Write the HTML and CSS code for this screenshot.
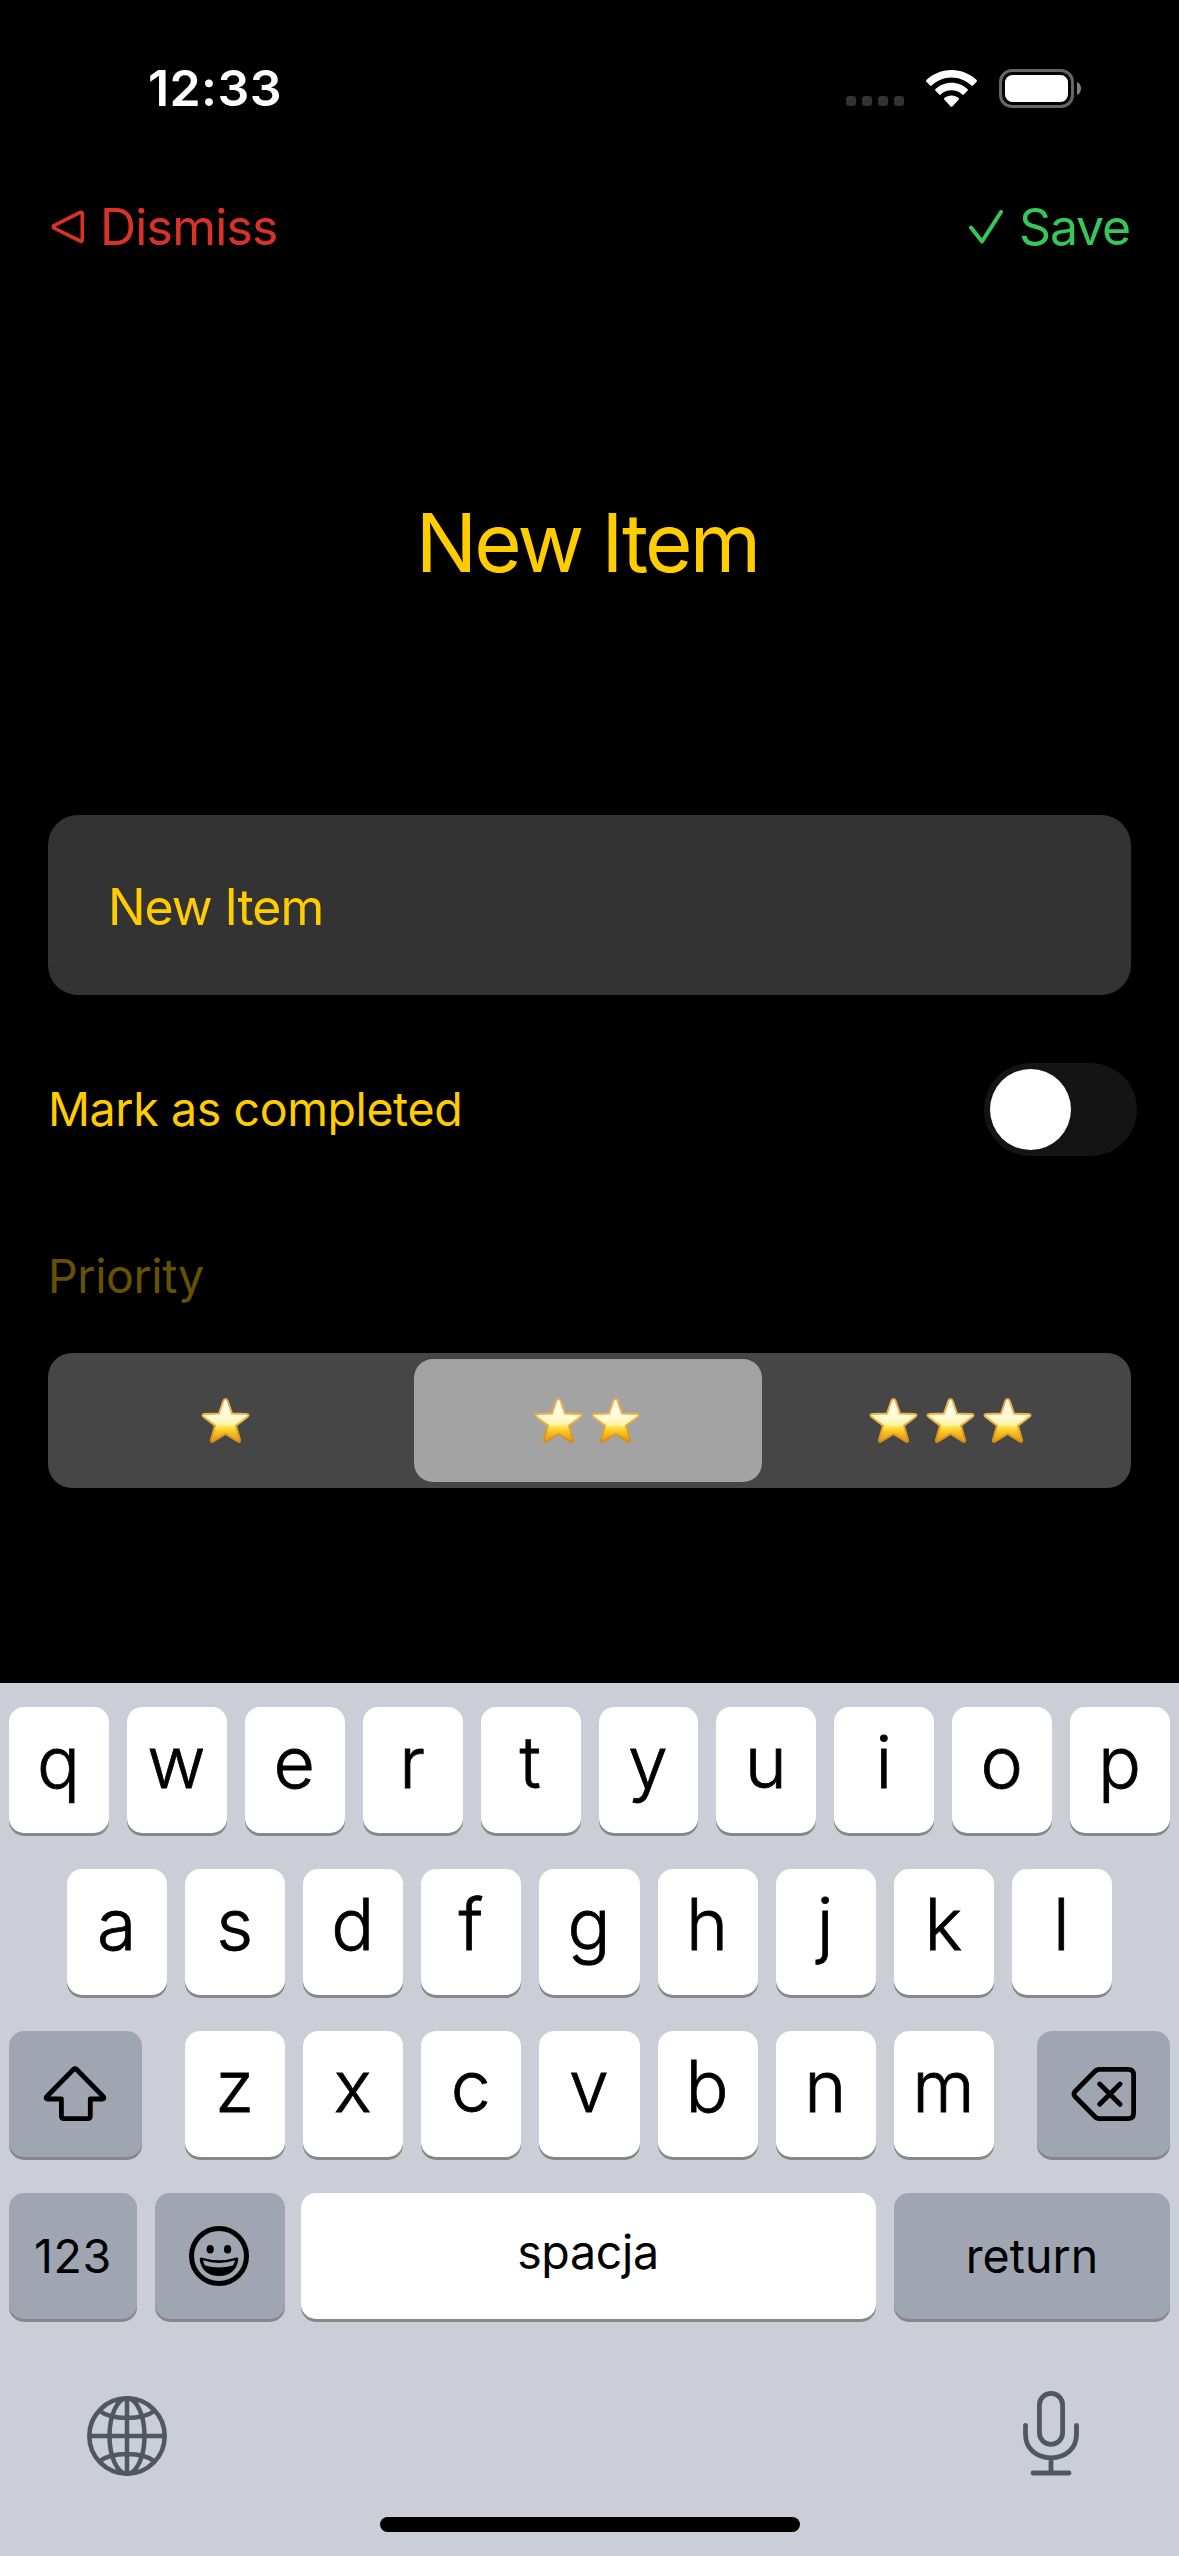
FILE: index.html
```html
<!DOCTYPE html>
<html lang="pl">
<head>
<meta charset="utf-8">
<title>New Item</title>
<link rel="stylesheet" href="styles.css">
</head>
<body>
<svg class="defs" width="0" height="0" aria-hidden="true">
  <defs>
    <linearGradient id="star-fill" x1="0" y1="0" x2="0" y2="1">
      <stop offset="0" stop-color="#fffdf0"/>
      <stop offset=".42" stop-color="#fffbd8"/>
      <stop offset=".6" stop-color="#fff2a6"/>
      <stop offset=".67" stop-color="#fcdf3c"/>
      <stop offset=".82" stop-color="#fbb51c"/>
      <stop offset="1" stop-color="#e8920f"/>
    </linearGradient>
    <linearGradient id="star-edge" x1="0" y1="0" x2="0" y2="1">
      <stop offset="0" stop-color="#f2ab4a"/>
      <stop offset=".5" stop-color="#e6b445"/>
      <stop offset="1" stop-color="#cf8f17"/>
    </linearGradient>
    <symbol id="star" viewBox="0 0 49 47">
      <path d="M24.500 2c1 0 1.800.8 2.200 2l4.300 12.600 14.600.3c2 0 2.500 1.600 1 2.800L35 28.700l4 14.100c.5 1.900-.7 2.600-2.300 1.600L24.500 36.900l-12.200 7.500c-1.600 1-2.800.3-2.300-1.600l4-14.100L2.400 19.700c-1.500-1.200-1-2.800 1-2.800l14.600-.3L22.300 4c.4-1.200 1.200-2 2.200-2z" fill="url(#star-fill)" stroke="url(#star-edge)" stroke-width="2"/>
    </symbol>
  </defs>
</svg>
<main class="screen">
  <header class="status">
    <span class="time">12:33</span>
    <div class="status-icons">
      <div class="dots"><i></i><i></i><i></i><i></i></div>
      <svg class="wifi" width="51" height="37" viewBox="0 0 51 37" fill="#fff">
        <path d="M25.500 0C35.300 0 44.200 3.800 50.600 10.100c.5.500.5 1.200 0 1.700L46.900 15.500c-.4.400-1.200.4-1.600 0C40.100 10.500 33.200 7.500 25.500 7.500S10.900 10.500 5.700 15.500c-.4.400-1.200.4-1.600 0L.4 11.800c-.5-.5-.5-1.200 0-1.700C6.800 3.800 15.700 0 25.500 0z"/>
        <path d="M25.500 12.700c6.200 0 11.800 2.400 16 6.300.5.500.5 1.200 0 1.700l-3.700 3.700c-.4.400-1.100.4-1.600 0-2.800-2.600-6.600-4.100-10.700-4.100s-7.900 1.500-10.700 4.100c-.5.400-1.200.4-1.600 0L9.500 20.700c-.5-.5-.5-1.200 0-1.700 4.200-3.900 9.800-6.300 16-6.300z"/>
        <path d="M25.500 25.500c2.700 0 5.200.9 7.100 2.500.5.400.5 1.200.1 1.600l-6.300 6.800c-.5.500-1.300.5-1.800 0l-6.300-6.800c-.4-.4-.4-1.200.1-1.600 1.900-1.600 4.400-2.500 7.100-2.500z"/>
      </svg>
      <svg class="battery" width="82" height="39" viewBox="0 0 82 39">
        <rect x="1.500" y="1.500" width="72" height="36" rx="11.500" fill="none" stroke="#666" stroke-width="3"/>
        <rect x="6" y="6" width="63" height="27" rx="7.500" fill="#fff"/>
        <path d="M78 13c2.700 1.100 4 3.700 4 6.500s-1.300 5.400-4 6.500z" fill="#808080"/>
      </svg>
    </div>
  </header>

  <nav class="nav">
    <a class="dismiss">
      <svg width="34" height="34" viewBox="0 0 34 34" fill="none" stroke="currentColor" stroke-width="3.600" stroke-linejoin="round"><path d="M2.900 15.600 29.200 2.300Q31.300 1.800 31.300 4V29.500Q31.300 32 29.200 31L2.900 18Q1.600 16.800 2.900 15.600z"/></svg>
      <span>Dismiss</span>
    </a>
    <a class="save">
      <svg width="34" height="34" viewBox="0 0 34 34" fill="none" stroke="currentColor" stroke-width="4" stroke-linecap="round" stroke-linejoin="round"><path d="M2 17.500 13 31.500 32 2"/></svg>
      <span>Save</span>
    </a>
  </nav>

  <h1 class="title">New Item</h1>

  <section class="form">
    <div class="field">New Item</div>
    <div class="toggle-row">
      <span class="label">Mark as completed</span>
      <div class="switch"><div class="knob"></div></div>
    </div>
    <div class="label priority">Priority</div>
    <div class="segments">
      <div class="segment one"><svg class="star"><use href="#star"/></svg></div>
      <div class="segment two"><svg class="star"><use href="#star"/></svg><svg class="star"><use href="#star"/></svg></div>
      <div class="segment three"><svg class="star"><use href="#star"/></svg><svg class="star"><use href="#star"/></svg><svg class="star"><use href="#star"/></svg></div>
    </div>
  </section>

  <section class="keyboard">
    <div class="row">
      <div class="key">q</div><div class="key">w</div><div class="key">e</div><div class="key">r</div><div class="key">t</div><div class="key">y</div><div class="key">u</div><div class="key">i</div><div class="key">o</div><div class="key">p</div>
    </div>
    <div class="row middle">
      <div class="key">a</div><div class="key">s</div><div class="key">d</div><div class="key">f</div><div class="key">g</div><div class="key">h</div><div class="key">j</div><div class="key">k</div><div class="key">l</div>
    </div>
    <div class="row">
      <div class="key dark shift">
        <svg width="64" height="56" viewBox="0 0 64 56" fill="none" stroke="#000" stroke-width="4.800" stroke-linejoin="round"><path d="M30.600 3.300Q32 2 33.400 3.300L60.400 30.800Q61.600 33 59.500 33H47.300V50Q47.300 52.700 44.500 52.700H21Q18.400 52.700 18.400 50V33H4.500Q2.400 33 3.600 30.800z"/></svg>
      </div>
      <div class="letters">
        <div class="key">z</div><div class="key">x</div><div class="key">c</div><div class="key">v</div><div class="key">b</div><div class="key">n</div><div class="key">m</div>
      </div>
      <div class="key dark delete">
        <svg width="66" height="56" viewBox="0 0 66 56" fill="none" stroke="#000" stroke-width="4.800" stroke-linejoin="round" stroke-linecap="round"><path d="M28.500 3.300H57Q62.600 3.300 62.600 9V47Q62.600 52.700 57 52.700H28.500Q25.500 52.700 23.500 50.300L4 30.500Q2 28 4 25.500L23.500 5.700Q25.500 3.300 28.500 3.300zM28.700 18 49 38.300M49 18 28.700 38.300"/></svg>
      </div>
    </div>
    <div class="row">
      <div class="key dark text numbers">123</div>
      <div class="key dark emoji">
        <svg width="60" height="60" viewBox="0 0 60 60"><circle cx="30" cy="30" r="27.500" fill="none" stroke="#000" stroke-width="5"/><ellipse cx="21.200" cy="23.300" rx="3.600" ry="4.300"/><ellipse cx="38.600" cy="23.300" rx="3.600" ry="4.300"/><path fill-rule="evenodd" d="M12.300 31.500Q30 37 47.700 31.500Q49.300 31.300 49.300 33.500C48 44 41 50 30 50S12 44 10.700 33.500Q10.700 31.300 12.300 31.500zM14 34.300Q14.500 37 16 39.500Q30 43.500 44 39.500Q45.500 37 46 34.300Q30 39.500 14 34.300z"/></svg>
      </div>
      <div class="key text space">spacja</div>
      <div class="key dark text return">return</div>
    </div>
    <div class="tools">
      <svg width="80" height="80" viewBox="0 0 80 80" fill="none" stroke="#52565f" stroke-width="4.500"><circle cx="40" cy="40" r="37.700"/><ellipse cx="40" cy="40" rx="17.500" ry="37.700"/><path d="M40 2V78M2 40H78M12 14.500C25 24.500 55 24.500 68 14.500M12 65.500C25 55.500 55 55.500 68 65.500"/></svg>
      <svg width="56" height="85" viewBox="0 0 56 85" fill="none" stroke="#52565f" stroke-width="4.800" stroke-linecap="round"><rect x="16.400" y="2.400" width="23.200" height="51" rx="11.600"/><path d="M2.500 34.300V43C2.500 57.500 13 66.800 28 66.800S53.500 57.500 53.500 43V34.300M28 67V81M10 82H46"/></svg>
    </div>
    <div class="home"></div>
  </section>
</main>
</body>
</html>
```
FILE: styles.css
```css
* { box-sizing: border-box; }

body {
  margin: 0;
  background: #000;
  font-family: Inter, "Liberation Sans", sans-serif;
}

.defs { display: block; height: 0; }

svg { display: block; flex: none; }

.screen {
  width: 1179px;
  height: 2556px;
  display: flex;
  flex-direction: column;
  background: #000;
  overflow: hidden;
}

.status {
  height: 176px;
  padding: 0 98px 0 148px;
  display: flex;
  align-items: center;
  justify-content: space-between;
}

.time {
  color: #fff;
  font-size: 50px;
  font-weight: 600;
  line-height: 60px;
  letter-spacing: 0.4px;
}

.status-icons { display: flex; align-items: center; }

.dots {
  display: flex;
  gap: 6px;
  padding-top: 26px;
  margin-right: 22px;
}

.dots i {
  width: 10px;
  height: 10px;
  border-radius: 3px;
  background: #333;
}

.wifi { margin-right: 22px; }

.nav {
  height: 102px;
  padding: 0 49px 0 51px;
  display: flex;
  align-items: center;
  justify-content: space-between;
  font-size: 50px;
  line-height: 60px;
}

.nav a { display: flex; align-items: center; }

.dismiss { color: #da3228; gap: 15px; }
.dismiss span { letter-spacing: -0.8px; }

.save { color: #34c759; gap: 16px; }
.save span { letter-spacing: -1.2px; }

.title {
  margin: 214px 0 0;
  padding-right: 5px;
  height: 101px;
  color: #fc0;
  font-size: 81.500px;
  font-weight: 400;
  line-height: 101px;
  letter-spacing: -2.800px;
  text-align: center;
}

.form {
  margin-top: 222px;
  padding: 0 48px;
  color: #fc0;
}

.field {
  height: 180px;
  padding: 3px 60px 0;
  display: flex;
  align-items: center;
  border-radius: 30px;
  background: #333;
  font-size: 50px;
  letter-spacing: -1.1px;
}

.toggle-row {
  height: 93px;
  margin: 68px -6px 0 0;
  display: flex;
  align-items: center;
  justify-content: space-between;
}

.label {
  font-size: 46.500px;
  line-height: 60px;
  letter-spacing: -0.4px;
}

.toggle-row .label { padding-bottom: 2px; }

.switch {
  width: 153px;
  height: 93px;
  padding: 6px;
  border-radius: 47px;
  background: #141414;
}

.knob {
  width: 81px;
  height: 81px;
  border-radius: 50%;
  background: #fff;
}

.priority { margin-top: 90px; color: #665200; }

.segments {
  height: 135px;
  margin-top: 47px;
  padding: 6px 0;
  display: flex;
  border-radius: 24px;
  background: #464646;
}

.segment {
  display: flex;
  align-items: center;
  justify-content: center;
  gap: 8px;
  border-radius: 19px;
}

.star { width: 49px; height: 47px; }

.one { width: 354px; margin-right: 12px; }
.two { width: 348px; margin-right: 8px; padding-right: 2px; background: #a3a3a3; }
.three { flex: 1; }

.keyboard {
  height: 873px;
  margin-top: auto;
  padding: 24px 9px 0;
  display: flex;
  flex-direction: column;
  background: #cbced7;
}

.row {
  height: 126px;
  margin-bottom: 36px;
  display: flex;
  gap: 18px;
}

.middle { padding: 0 58px; }

.key {
  flex: 1 1 0;
  min-width: 0;
  padding: 0 1px 16px 0;
  display: flex;
  align-items: center;
  justify-content: center;
  border-radius: 15px;
  background: #fff;
  box-shadow: 0 3px 0 #86878a;
  color: #000;
  font-size: 71.500px;
  font-weight: 300;
  line-height: 86px;
  -webkit-text-stroke: 0.8px #000;
}

.dark { padding: 0; background: #9fa5b1; }

.text {
  font-size: 46.500px;
  font-weight: 400;
  line-height: 60px;
  -webkit-text-stroke: 0;
}

.letters {
  flex: 1;
  margin: 0 25px;
  display: flex;
  gap: 18px;
}

.shift, .delete { flex: 0 0 133px; }
.shift { padding-right: 2px; }
.numbers { flex: 0 0 128px; letter-spacing: 0.6px; }
.emoji { flex: 0 0 130px; padding-right: 2px; }
.space { flex: 0 0 575px; margin-left: -2px; padding-bottom: 8px; letter-spacing: -0.3px; }

.tools {
  height: 85px;
  margin-top: 36px;
  padding: 0 91px 0 78px;
  display: flex;
  align-items: flex-end;
  justify-content: space-between;
}

.home {
  width: 420px;
  height: 15px;
  margin: 41px auto 0;
  border-radius: 8px;
  background: #000;
}
```
